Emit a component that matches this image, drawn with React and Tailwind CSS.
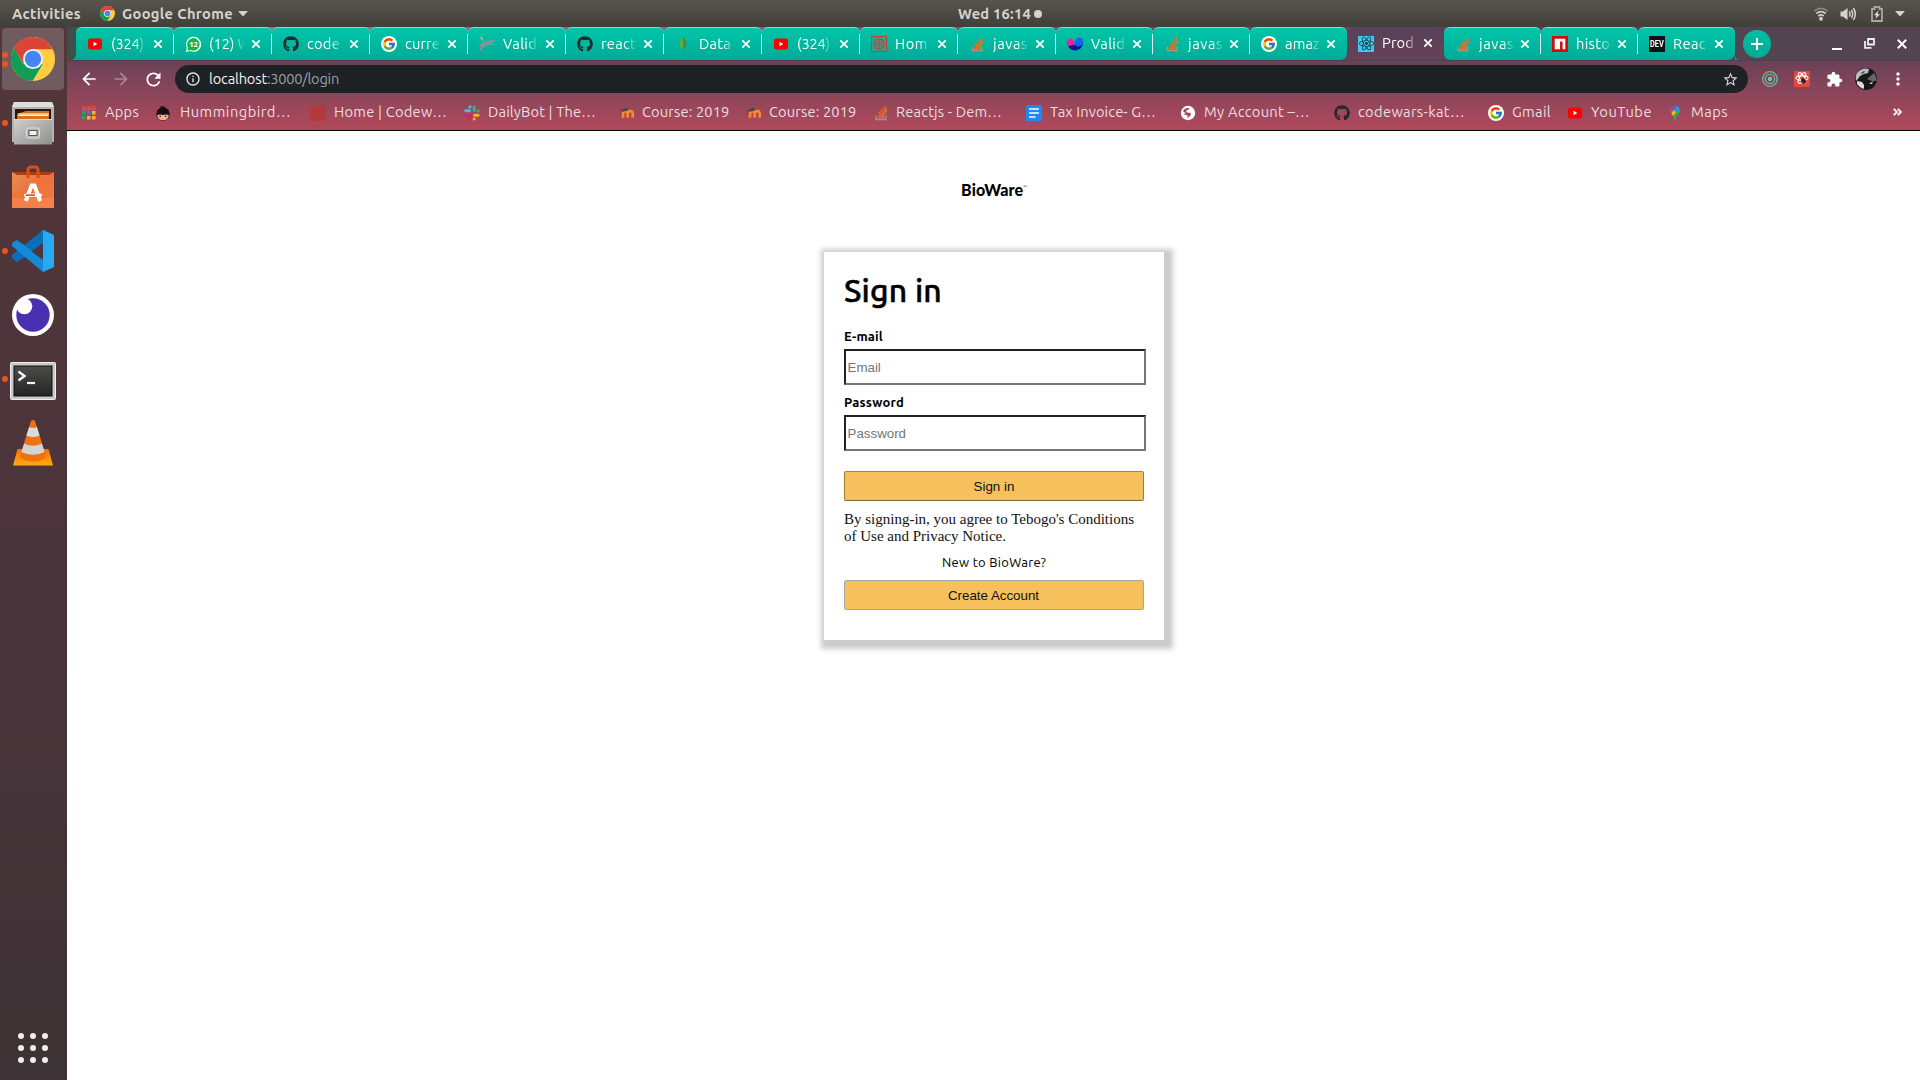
import React, { useLayoutEffect, useRef, useState } from "react";
import { FaGithub } from "react-icons/fa";
import { FcGoogle } from "react-icons/fc";
import { SiCodewars, SiReact } from "react-icons/si";
import { MdExtension, MdStarBorder, MdRefresh, MdArrowBack, MdArrowForward, MdInfoOutline } from "react-icons/md";

/* Text whose letter spacing is adjusted so that it spans a given width. */
function Fit({ w, className = "", children }) {
  const ref = useRef(null);
  const [spacing, setSpacing] = useState(null);
  useLayoutEffect(() => {
    const natural = ref.current.getBoundingClientRect().width;
    setSpacing((w - natural) / String(children).length);
  }, []);
  return (
    <span ref={ref} className={"inline-block whitespace-nowrap " + className} style={spacing === null ? undefined : { letterSpacing: spacing + "px" }}>
      {children}
    </span>
  );
}

function Chrome({ size }) {
  return (
    <svg width={size} height={size} viewBox="0 0 48 48" className="shrink-0">
      <circle cx="24" cy="24" r="24" fill="#ffcd40" />
      <path d="M24 24 L34.4 30 L23.5 48 A24 24 0 0 1 3.6 11.5 L13.6 30 Z" fill="#0f9d58" />
      <path d="M3.4 11.7 A24 24 0 0 1 45.4 13.4 L24 13.4 L13.8 29.5 Z" fill="#db4437" />
      <circle cx="24" cy="24" r="11" fill="#f1f1f1" />
      <circle cx="24" cy="24" r="8.9" fill="#4285f4" />
    </svg>
  );
}

const YouTube = () => (
  <svg width="16" height="16" viewBox="0 0 16 16">
    <rect x="1" y="2.5" width="14" height="11" rx="2.5" fill="#ff0000" />
    <path d="M6.5 5.8 L10.3 8 L6.5 10.2Z" fill="#fff" />
  </svg>
);
const WhatsApp = () => (
  <svg width="17" height="17" viewBox="0 0 18 18" className="shrink-0">
    <path d="M1 17 L2 12.5 A8 8 0 1 1 5.6 16Z" fill="#fff" />
    <path d="M2.5 15.5 L3.3 12.4 A6.6 6.6 0 1 1 5.8 14.7Z" fill="#0fb847" />
    <text x="9" y="11.9" textAnchor="middle" fontFamily="Open Sans, sans-serif" fontSize="8" fontWeight="700" fill="#fff">12</text>
  </svg>
);
const Github = () => <FaGithub size={16} color="#24292e" />;
const Google = () => (
  <span className="flex size-4 items-center justify-center rounded-full bg-white"><FcGoogle size={14} /></span>
);
const Stack = () => (
  <svg width="16" height="16" viewBox="0 0 16 16" fill="none">
    <path d="M3 10.5 V14.5 H13 V10.5" stroke="#9a9a95" strokeWidth="1.3" />
    <path d="M4.8 12.4H11.2M4.9 10L11.3 11.1M5.7 7.4L11.5 10M7.3 4.8L12.2 8.8M9.6 2.5L13 7.7M12.3 1.2L13.6 7" stroke="#f4701c" strokeWidth="1.2" />
  </svg>
);
const Mongo = () => (
  <svg width="16" height="16" viewBox="0 0 16 16">
    <path d="M8 1 C10.8 4 11.5 6 11.3 8.3 C11.2 10.5 10 12 8.3 13.3 L8 15.5Z" fill="#4b8b3c" />
    <path d="M8 1 C5.3 4 4.6 6 4.7 8.3 C4.8 10.5 6 12 7.7 13.3 L8 15.5Z" fill="#5fae43" />
  </svg>
);
const Sequel = () => (
  <svg width="18" height="16" viewBox="0 0 18 16" fill="none" className="shrink-0">
    <path d="M3 14.5 C3 9 6 5.5 13 6.5 M4.5 11 C6 8.5 8 7.5 12 8 M1 8.5 L6 8.5" stroke="#928c98" strokeWidth="2.2" />
    <path d="M3 1 L6 6 M11 6 L17 4 M13 8 L16 8" stroke="#a58b9d" strokeWidth="1.4" />
    <path d="M3 1 L4.5 3.5" stroke="#e5c350" strokeWidth="1.4" />
  </svg>
);
const Codewars = () => (
  <span className="flex size-4 items-center justify-center bg-[#b1483c]"><SiCodewars size={14} color="#35a08b" /></span>
);
const CodewarsRed = () => (
  <span className="flex size-4 items-center justify-center rounded-[2px] bg-[#c9332f]"><SiCodewars size={13} color="#a13f45" /></span>
);
const Yup = () => (
  <svg width="16" height="16" viewBox="0 0 16 16">
    <path d="M0 6 A8 8 0 0 0 16 7 L11 3 L8 9 L3 4Z" fill="#12129c" />
    <path d="M0 8 C0 9 1 10 2 10 L8 8.5 C7 5 6 2.5 3 2.5 C1 2.5 0 5 0 8Z" fill="#fb1c9c" />
    <path d="M16 7 C16 3 14.5 1.5 12.5 1.5 C9.5 1.5 8 4 7.5 8.5 L10 10.5 C13 10.5 16 9.5 16 7Z" fill="#1264f2" />
  </svg>
);
const ReactBox = () => (
  <span className="flex size-4 items-center justify-center bg-[#3cc8f0]"><SiReact size={15} color="#17323f" /></span>
);
const Npm = () => (
  <svg width="16" height="16" viewBox="0 0 16 16">
    <rect width="16" height="16" fill="#d50c0c" />
    <path d="M2.7 2.7H13.3V13.3H10.6V5.4H8V13.3H2.7Z" fill="#fff" />
  </svg>
);
const Dev = () => (
  <span className="flex size-4 items-center justify-center bg-[#111] font-['Roboto',sans-serif] leading-none font-bold text-white">
    <span className="inline-block scale-x-[.78] text-[9.5px]">DEV</span>
  </span>
);
const Apps = () => (
  <svg width="14" height="14" viewBox="0 0 14 14">
    <path d="M0 0H3.5V3.5H0ZM5 0H8.5V3.5H5ZM10 0H13.5V3.5H10Z" fill="#ea4335" />
    <path d="M0 5H3.5V8.5H0ZM0 10H3.5V13.5H0Z" fill="#1fa463" />
    <path d="M5 5H8.5V8.5H5Z" fill="#2b7de9" />
    <path d="M10 5H13.5V8.5H10ZM5 10H8.5V13.5H5ZM10 10H13.5V13.5H10Z" fill="#f4b23c" />
    <path d="M0 2.7H14M0 3.9H14" stroke="#b46c7c" strokeWidth=".6" />
  </svg>
);
const Bird = () => (
  <svg width="16" height="16" viewBox="0 0 16 16">
    <circle cx="8" cy="9" r="6.7" fill="#171012" />
    <path d="M4 0 C5 3 8 0 10 2 L9 4 L6.5 3.5Z" fill="#171012" />
    <path d="M2.2 10 Q5 9 8 10 Q11 9 13.8 10 Q13.5 15.3 8 15.3 Q2.5 15.3 2.2 10Z" fill="#f2ac92" />
    <circle cx="5.2" cy="11.3" r=".8" fill="#222" /><circle cx="10.8" cy="11.3" r=".8" fill="#222" />
  </svg>
);
const Slack = () => (
  <svg width="16" height="16" viewBox="0 0 16 16" strokeWidth="3" strokeLinecap="round">
    <path d="M1.8 5.8H5.5M6 1.8V2" stroke="#36c5f0" />
    <path d="M10.2 1.8V5.5M14 6H14.1" stroke="#2eb67d" />
    <path d="M14.1 10.2H10.5M10.2 14V14.1" stroke="#ecb22e" />
    <path d="M5.8 14.1V10.5M2 10.2H1.9" stroke="#e01e5a" />
  </svg>
);
const Moodle = () => (
  <svg width="16" height="16" viewBox="0 0 17 16" fill="none">
    <path d="M4.3 13V8.7A2.2 2.2 0 0 1 9.2 8.7V13M9.2 8.7A2.5 2.5 0 0 1 14.6 8.7V13" stroke="#f98a2c" strokeWidth="2.8" />
    <path d="M1 5 L7 2.5 L10 3.5 L8.5 6 L4 6.8Z" fill="#4a4a4a" />
    <path d="M1.5 5.5 L1 11" stroke="#8a4a45" strokeWidth=".8" />
  </svg>
);
const Docs = () => (
  <svg width="16" height="16" viewBox="0 0 16 16">
    <rect width="16" height="16" rx="1.3" fill="#1e88f5" />
    <path d="M3 4H13M3 8H13M3 12H9.5" stroke="#fff" strokeWidth="1.7" />
  </svg>
);
const Globe = () => (
  <svg width="16" height="16" viewBox="0 0 16 16">
    <circle cx="8" cy="8" r="7.2" fill="#fff" />
    <path d="M3 6.2 C4 3.5 7 2.5 9.5 3 L8 5 L5.8 5.7 L7 7.4 L10.8 8 L10.5 10.5 L7.5 13.3 L7.8 10.4 L4.2 9.5 L3.6 8.4 L6.3 8.6Z" fill="#a0455a" />
    <path d="M8.5 5.5H12.5L13.2 8.5 L11 7.6Z" fill="#fff" />
  </svg>
);
const Maps = () => (
  <svg width="16" height="16" viewBox="0 0 16 16">
    <path d="M3 6 A5 5 0 0 1 8 .8 L9.5 1 L4.5 8.3Z" fill="#1a73e8" />
    <path d="M3.2 4 L5.5 3.3 L6.5 4.8 L4 8 Q2.8 6 3.2 4Z" fill="#ea4335" />
    <path d="M9.5 1 Q13 2.2 13 6 Q13 8 10.5 10.5 Q9 12.5 8.4 15.5 H7.6 Q7 12.5 6 11Z" fill="#34a853" />
    <path d="M4.3 8.2 L6.7 5.2 L9.3 7 L6 11Z" fill="#fbbc04" />
    <path d="M6.5 4.8 L9.5 1 Q12 2 12.6 4 L9.4 7.3Z" fill="#4285f4" />
  </svg>
);

const tabs = [
  { t: "(324)", I: YouTube, w: 33 }, { t: "(12) W", I: WhatsApp, w: 42 }, { t: "code", I: Github, w: 33 },
  { t: "curre", I: Google, w: 35 }, { t: "Valid", I: Sequel, w: 34 }, { t: "react", I: Github, w: 35 },
  { t: "Data", I: Mongo, w: 32 }, { t: "(324)", I: YouTube, w: 33 }, { t: "Hom", I: Codewars, w: 33 },
  { t: "javas", I: Stack, w: 35 }, { t: "Valid", I: Yup, w: 34, s: 1 }, { t: "javas", I: Stack, w: 35, s: 1 },
  { t: "amaz", I: Google, w: 35, s: 1, end: 1 }, { t: "Prod", I: ReactBox, w: 32, s: 1, active: 1 },
  { t: "javas", I: Stack, w: 35, s: 1, first: 1 }, { t: "histo", I: Npm, w: 34, s: 1 }, { t: "Reac", I: Dev, w: 33, s: 1, end: 1 },
];

function Tab({ t, I, w, s, active, end, first }) {
  return (
    <div
      className={
        "flex h-[33px] shrink-0 items-center pb-px " + (s ? "w-[97px] " : "w-[98px] ") +
        (active
          ? "rounded-t-[7px] bg-linear-to-b from-[#55425a] to-[#684158]"
          : "rounded-t-[6px] border-t border-[#7fe0cc] bg-linear-to-b from-[#00c5aa] to-[#00ab96] " + (end ? "rounded-br-[7px] " : "") + (first ? "rounded-bl-[6px]" : ""))
      }
    >
      <span className="ml-[11px] flex w-4 shrink-0 items-center justify-center pt-px"><I /></span>
      <span className="ml-[8px] w-[36px] shrink-0 mask-r-from-65% mask-r-to-100% text-[14.67px] leading-5 whitespace-nowrap text-white">
        <Fit w={w}>{t}</Fit>
      </span>
      <svg width="10" height="10" viewBox="0 0 10 10" className={"shrink-0 " + (s ? "ml-[5px]" : "ml-[6px]")} stroke="#fff" strokeWidth="1.8">
        <path d="M1.3 1.3L8.7 8.7M8.7 1.3L1.3 8.7" />
      </svg>
      {!active && !end && <span className="ml-auto h-5 w-px bg-[#e4fbf6]" />}
    </div>
  );
}

const bookmarks = [
  { t: "Apps", I: Apps, w: 34, c: "w-[73px]", g: "ml-[7px]" },
  { t: "Hummingbird…", I: Bird, w: 111, c: "w-[155px]", g: "ml-[9px]" },
  { t: "Home | Codew…", I: CodewarsRed, w: 113, c: "w-[154px]", g: "ml-[8px]" },
  { t: "DailyBot | The…", I: Slack, w: 108, c: "w-[155px]", g: "ml-[8px]" },
  { t: "Course: 2019", I: Moodle, w: 87.5, c: "w-[127px]", g: "ml-[7px]" },
  { t: "Course: 2019", I: Moodle, w: 87.5, c: "w-[127px]", g: "ml-[7px]" },
  { t: "Reactjs - Dem…", I: Stack, w: 106, c: "w-[153px]", g: "ml-[7px]" },
  { t: "Tax Invoice- G…", I: Docs, w: 106, c: "w-[154px]", g: "ml-[8px]" },
  { t: "My Account –…", I: Globe, w: 106, c: "w-[154px]", g: "ml-[8px]" },
  { t: "codewars-kat…", I: Github, w: 107, c: "w-[154px]", g: "ml-[8px]" },
  { t: "Gmail", I: Google, w: 39, c: "w-[79px]", g: "ml-[8px]" },
  { t: "YouTube", I: YouTube, w: 61, c: "w-[100px]", g: "ml-[8px]" },
  { t: "Maps", I: Maps, w: 37, c: "w-[80px]", g: "ml-[8px]" },
];

const Files = () => (
  <svg width="42" height="44" viewBox="0 0 42 44">
    <defs><linearGradient id="fg" x1="0" y1="0" x2="1" y2="1"><stop stopColor="#cfcfcd" /><stop offset="1" stopColor="#8f8f8f" /></linearGradient></defs>
    <path d="M2 1H40L42 6V41H0V6Z" fill="#b4b3b1" /><path d="M2 1H40L42 6H0Z" fill="#dededc" />
    <rect x="3" y="8" width="36" height="11" fill="#25170f" />
    <path d="M5 13L14 10H37V19H5Z" fill="#d9711f" /><path d="M6 12H37V15H6Z" fill="#f3b067" /><path d="M7 13.5H36V15H7Z" fill="#fff2d8" />
    <path d="M2 18H40V43.5H2Z" fill="url(#fg)" /><path d="M2 18H40V19H2Z" fill="#ddd" />
    <rect x="14.5" y="27" width="13" height="10" rx="1.5" fill="#b5b5b5" stroke="#dedede" />
    <rect x="17" y="29.5" width="8" height="5" fill="#f2f2f2" stroke="#555" />
  </svg>
);
const Software = () => (
  <svg width="42" height="44" viewBox="0 0 42 44">
    <defs><linearGradient id="sg" x1="0" y1="0" x2="1" y2="1"><stop stopColor="#e69058" /><stop offset=".5" stopColor="#ee7038" /><stop offset="1" stopColor="#f47d42" /></linearGradient></defs>
    <path d="M0 7H42V12H0Z" fill="#a93d13" /><path d="M0 7L5 10H37L42 7V43H0Z" fill="url(#sg)" />
    <path d="M0 33H42V43H0Z" fill="#f58650" opacity=".7" />
    <path d="M16 13V5Q16 2 19 2H23Q26 2 26 5V13" fill="none" stroke="#d4501d" strokeWidth="3" />
    <path d="M13.8 36L19.6 20.5H22.4L28.2 36" fill="none" stroke="#fff" strokeWidth="4" />
    <rect x="12" y="28.5" width="18" height="3.4" rx="1.7" fill="#fff" /><path d="M13.5 29.3H23V31H13.5Z" fill="#e95420" />
  </svg>
);
const Code = () => (
  <svg width="42" height="44" viewBox="0 0 42 44">
    <path d="M31 1L42 6V11L5 33L0 29V26Z" fill="#0a6fb8" />
    <path d="M0 14L5 11L37 34L31 43L0 17Z" fill="#148ad8" />
    <path d="M31 1L42 6V38L31 43Z" fill="#29a9f3" />
    <path d="M31 14V31L19.5 22.5Z" fill="#4e363a" />
  </svg>
);
const Insomnia = () => (
  <svg width="42" height="42" viewBox="0 0 42 42">
    <circle cx="21" cy="21" r="21" fill="#fff" /><circle cx="21" cy="21" r="16.7" fill="#4930b0" /><circle cx="12.3" cy="12.3" r="8" fill="#fff" />
  </svg>
);
const Terminal = () => (
  <svg width="46" height="38" viewBox="0 0 46 38" className="mt-[3px]">
    <defs><linearGradient id="tg" x1="0" y1="0" x2="0" y2="1"><stop stopColor="#4c4c4b" /><stop offset="1" stopColor="#242424" /></linearGradient></defs>
    <rect x=".5" y=".5" width="45" height="37" rx="1" fill="#cbc9c8" stroke="#eee" />
    <rect x="4" y="4" width="38" height="30" fill="url(#tg)" stroke="#111" />
    <path d="M8.5 9.5L14.5 14L8.5 18.5" stroke="#f4f4f4" strokeWidth="2.4" fill="none" /><path d="M17 21H25" stroke="#f4f4f4" strokeWidth="2.2" />
  </svg>
);
const Vlc = () => (
  <svg width="42" height="46" viewBox="0 0 42 46">
    <defs><linearGradient id="vg" x1="0" y1="0" x2="0" y2="1"><stop stopColor="#f56f0a" /><stop offset="1" stopColor="#ffab12" /></linearGradient></defs>
    <path d="M5.5 29H36.5L41 45.5H1Z" fill="url(#vg)" />
    <path d="M8.6 34L19 1Q21 -1 23 1L33.4 34L33.8 38Q21 45 8.2 38Z" fill="#ee7210" />
    <path d="M17.1 7Q21 9 24.9 7L27.6 15.5Q21 18.5 14.4 15.5Z" fill="#d7dcdd" />
    <path d="M12.2 23.5Q21 28 29.8 23.5L32.6 32Q21 37.5 9.4 32Z" fill="#d0d5d7" />
  </svg>
);

const dock = [
  { I: () => <Chrome size={44} />, dots: 2, sel: true },
  { I: Files, dots: 1 }, { I: Software }, { I: Code, dots: 1 }, { I: Insomnia }, { I: Terminal, dots: 1 }, { I: Vlc },
];

function Dock() {
  return (
    <aside className="flex w-[67px] shrink-0 flex-col bg-linear-to-b from-[#523639] via-[#4a343b] to-[#3d3235]">
      {dock.map(({ I, dots = 0, sel }, i) => (
        <div key={i} className="flex h-16 items-center pl-[2px]">
          <div className={"flex h-[62px] w-[62px] items-center rounded-[4px] " + (sel ? "bg-[#705b5f]" : "")}>
            <div className="flex w-[6px] shrink-0 flex-col gap-[3px]">
              {Array.from({ length: dots }, (_, k) => <span key={k} className="size-[6px] rounded-full bg-[#e95420]" />)}
            </div>
            <div className="flex w-[50px] items-center justify-center"><I /></div>
          </div>
        </div>
      ))}
      <div className="mt-auto grid h-16 grid-cols-[6px_6px_6px] content-center gap-[6px] pl-[18px]">
        {Array.from({ length: 9 }, (_, k) => <span key={k} className="size-[6px] rounded-full bg-[#f0efed]" />)}
      </div>
    </aside>
  );
}

function TopBar() {
  return (
    <header className="flex h-[27px] shrink-0 items-center bg-linear-to-b from-[#58554c] to-[#403f3a] text-[14.67px] leading-5 font-bold text-[#d6d3cd]">
      <Fit w={69} className="ml-3">Activities</Fit>
      <span className="mr-[6px] ml-[19px] flex w-[16px]"><Chrome size={15} /></span>
      <Fit w={111}>Google Chrome</Fit>
      <svg width="10" height="6" className="ml-[5px]"><path d="M0 0H10L5 5.5Z" fill="#d6d3cd" /></svg>
      <div className="ml-[710px] flex items-center">
        <Fit w={73}>Wed 16:14</Fit>
        <span className="ml-[3px] size-[8px] rounded-full bg-[#d6d3cd]" />
      </div>
      <div className="ml-auto flex items-center pr-[15px]">
        <svg width="14" height="14" viewBox="0 0 14 14" fill="none" stroke="#d0cdc8" strokeWidth="1.7">
          <path d="M.5 4Q7-1.2 13.5 4" opacity=".45" /><path d="M2.4 6.5Q7 2.8 11.6 6.5M4.3 9Q7 6.8 9.7 9" /><circle cx="7" cy="11.8" r="1.1" fill="#d0cdc8" />
        </svg>
        <svg width="17" height="14" viewBox="0 0 17 14" className="ml-[12px]" fill="none" stroke="#d6d3cd" strokeWidth="1.5">
          <path d="M.5 4.5H3L7.5 1V13L3 9.5H.5Z" fill="#d6d3cd" stroke="none" /><path d="M9.3 4.5Q10.8 7 9.3 9.5M11.4 2.8Q14 7 11.4 11.2M13.4 1Q17.3 7 13.4 13" />
        </svg>
        <svg width="12" height="16" viewBox="0 0 12 16" className="ml-[14px]" fill="none" stroke="#a9a6a0" strokeWidth="1.8">
          <path d="M1 3H3.5V1H8.5V3H11V15H1Z" /><path d="M7.5 4.5L3 9.3H5.5L4.5 12.8L9 8.2H6.5Z" fill="#e4e1dc" stroke="none" />
        </svg>
        <svg width="10" height="6" className="ml-[12px]"><path d="M0 0H10L5 5.5Z" fill="#d6d3cd" /></svg>
      </div>
    </header>
  );
}

function Browser() {
  return (
    <div className="shrink-0">
      <div className="flex h-[34px] border-b border-[#4f4148] bg-linear-to-r from-[#3d4f48] from-0% via-[#8a7c7c] via-10% to-[#524451] to-80%">
        <svg width="9" height="33" viewBox="0 0 9 33" className="shrink-0"><path d="M4 33Q9 33 9 26V33Z" fill="#00ab96" /></svg>
        {tabs.map((t, i) => <Tab key={i} {...t} />)}
        <svg width="4" height="33" viewBox="0 0 4 33" className="shrink-0"><path d="M0 26Q0 33 4 33H-7Z" fill="#00ab96" /></svg>
        <span className="mt-[3px] ml-[4px] flex size-[28px] items-center justify-center rounded-full bg-linear-to-b from-[#00bda3] to-[#00ab96]">
          <svg width="12" height="12" stroke="#fff" strokeWidth="2"><path d="M6 0V12M0 6H12" /></svg>
        </span>
        <div className="mr-[13px] ml-auto flex h-[33px] items-center">
          <svg width="10" height="12" className="mr-[22px]"><path d="M0 10H10V12H0Z" fill="#fff" /></svg>
          <svg width="11" height="11" viewBox="0 0 11 11" className="mr-[22px]" fill="none" stroke="#eee" strokeWidth="1.8"><path d="M4 1H10V6.5H4Z M1 3V9.8H7.5" /></svg>
          <svg width="10" height="10" viewBox="0 0 10 10" stroke="#fff" strokeWidth="2"><path d="M.8 .8L9.2 9.2M9.2 .8L.8 9.2" /></svg>
        </div>
      </div>
      <div className="h-[70px] border-b border-black bg-linear-to-b from-[#6a4158] to-[#b2485b]">
        <div className="flex h-9 items-center pl-[12px]">
          <MdArrowBack size={20} color="#fff" />
          <MdArrowForward size={20} color="#ab8494" className="ml-3" />
          <MdRefresh size={21} color="#fff" className="ml-[12px]" />
          <div className="ml-[11px] flex h-7 w-[1573px] items-center rounded-full bg-[#202124] pr-[9px] pl-[10px]">
            <MdInfoOutline size={16} color="#e8eaed" />
            <span className="ml-[8px] flex text-[14.67px] leading-5">
              <Fit w={58} className="text-[#f1f3f4]">localhost</Fit>
              <Fit w={72} className="text-[#9aa0a6]">:3000/login</Fit>
            </span>
            <MdStarBorder size={17} color="#d2d4d8" className="ml-auto" />
          </div>
          <svg width="16" height="16" viewBox="0 0 16 16" className="ml-[14px]" fill="none" stroke="#57c7a5" strokeWidth="1.3">
            <circle cx="8" cy="8" r="7.3" /><circle cx="8" cy="8" r="4.6" /><circle cx="8" cy="8" r="2.2" fill="#57d7ae" stroke="none" />
            <circle cx="4" cy="2" r="1.5" fill="#f2553c" stroke="none" /><circle cx="11.6" cy="5" r="1.3" fill="#f2553c" stroke="none" />
          </svg>
          <span className="ml-4 flex size-4 items-center justify-center bg-[#e24a3b]">
            <svg width="16" height="16" viewBox="0 0 16 16"><g fill="none" stroke="#fff" strokeWidth="1.1"><ellipse cx="8" cy="7" rx="6" ry="2.4" /><ellipse cx="8" cy="7" rx="6" ry="2.4" transform="rotate(60 8 7)" /><ellipse cx="8" cy="7" rx="6" ry="2.4" transform="rotate(120 8 7)" /></g><ellipse cx="9.5" cy="10" rx="2.4" ry="3" fill="#43201d" transform="rotate(-30 9.5 10)" /></svg>
          </span>
          <MdExtension size={17} color="#fff" className="ml-4" />
          <svg width="22" height="22" viewBox="0 0 22 22" className="ml-[12px]">
            <circle cx="11" cy="11" r="11" fill="#181818" />
            <path d="M2 5Q7-1 14 1L13 5L9 6L5 8L3 11L1 13Q0 8 2 5Z" fill="#bdbdbd" /><path d="M12 11L19 5Q22 9 21.5 13L17 13L14 12Z" fill="#666" />
            <path d="M2 13L7 14L9 17L9 20L8 21Q4 19 2 16Z" fill="#ddd" /><path d="M6 5L9 3L10 4L7 6Z" fill="#444" /><path d="M14 16L18 13L17 16Z" fill="#ccc" />
          </svg>
          <svg width="4" height="14" viewBox="0 0 4 14" fill="#fff" className="ml-[19px]"><circle cx="2" cy="2" r="1.7" /><circle cx="2" cy="7" r="1.7" /><circle cx="2" cy="12" r="1.7" /></svg>
        </div>
        <div className="flex h-[30px] items-center pl-[15px] text-[14.67px] leading-5 text-[#ecdde1]">
          {bookmarks.map(({ t, I, w, c, g }, i) => (
            <div key={i} className={"flex shrink-0 items-center " + c}>
              <span className="flex w-4 shrink-0 items-center pt-px"><I /></span>
              <Fit w={w} className={g}>{t}</Fit>
            </div>
          ))}
          <svg width="9" height="8" viewBox="0 0 9 8" className="mr-[18px] ml-auto" fill="none" stroke="#fff" strokeWidth="1.8"><path d="M.8 .8L4 4L.8 7.2M4.8 .8L8 4L4.8 7.2" /></svg>
        </div>
      </div>
    </div>
  );
}

function SignIn() {
  const input = "block h-9 w-[302px] border-2 border-t-[#212121] border-r-[#767676] border-b-[#767676] border-l-[#212121] bg-white px-[1.5px] font-['Liberation_Sans',Arial,sans-serif] text-[13.333px] placeholder:text-[#757575] outline-none";
  const button = "block h-[30px] w-[300px] rounded-[2px] border bg-[#f6c15c] pt-px font-['Liberation_Sans',Arial,sans-serif] text-[13.333px] text-[#111]";
  return (
    <main className="flex min-h-0 flex-1 flex-col items-center bg-white pl-px">
      <div className="mt-[47px] flex h-[24px] items-center font-['Lato',sans-serif] text-[16px] leading-6 font-black text-black">
        <Fit w={62}>BioWare</Fit>
        <span className="mb-[5px] text-[5px] leading-none font-normal text-[#333]">™</span>
      </div>
      <section className="mt-[50px] h-[388px] w-[340px] bg-white px-5 shadow-[3px_3px_5px_6px_#ccc]">
        <h1 className="mt-[17px] h-[42px] text-[32px] leading-[42px] font-medium text-black [-webkit-text-stroke:0.5px_black]"><Fit w={98}>Sign in</Fit></h1>
        <label className="mt-[17px] block h-4 text-[13px] leading-4 font-bold text-black"><Fit w={39}>E-mail</Fit></label>
        <input className={input + " mt-[5px]"} type="text" placeholder="Email" />
        <label className="mt-[9px] block h-4 text-[13px] leading-4 font-bold text-black"><Fit w={60}>Password</Fit></label>
        <input className={input + " mt-[5px]"} type="password" placeholder="Password" />
        <button className={button + " mt-5 border-t-[#a88734] border-r-[#9c7e31] border-b-[#846a29] border-l-[#9c7e31]"}>Sign in</button>
        <p className="mt-[10px] font-['Liberation_Serif',serif] text-[15px] leading-[17px] text-[#111]">
          <Fit w={290}>By signing-in, you agree to Tebogo's Conditions</Fit><br />
          <Fit w={162}>of Use and Privacy Notice.</Fit>
        </p>
        <div className="mt-[9px] text-center text-[13px] leading-4 text-black"><Fit w={104}>New to BioWare?</Fit></div>
        <button className={button + " mt-[10px] border-[#a6a6a6] pr-px"}>Create Account</button>
      </section>
    </main>
  );
}

export default function App() {
  return (
    <div className="flex h-[1080px] w-[1920px] flex-col overflow-hidden bg-white font-['Ubuntu','Noto_Sans',sans-serif]">
      <TopBar />
      <div className="flex min-h-0 flex-1">
        <Dock />
        <div className="flex min-w-0 flex-1 flex-col">
          <Browser />
          <SignIn />
        </div>
      </div>
    </div>
  );
}
